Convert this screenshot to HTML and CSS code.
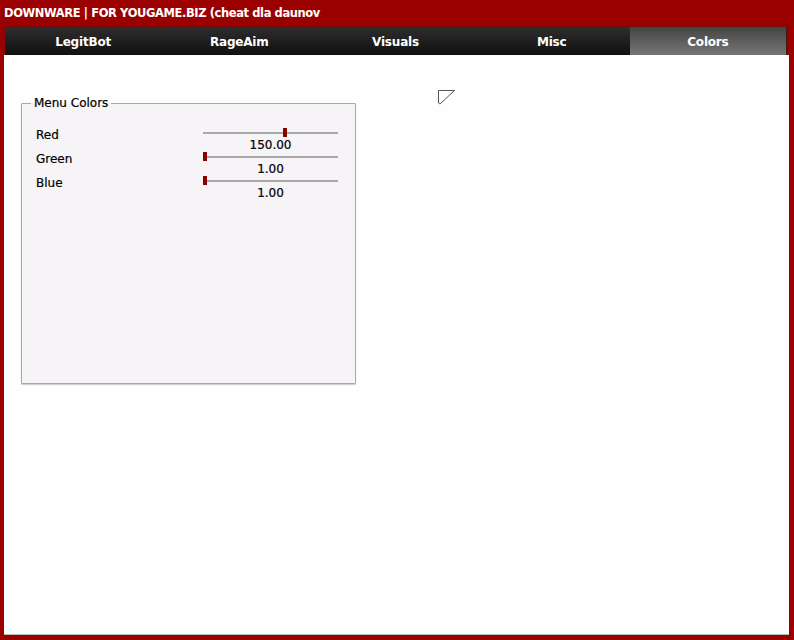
FILE: index.html
```html
<!DOCTYPE html>
<html lang="en">

<head>
  <meta charset="UTF-8">
  <title>DOWNWARE</title>
  <link rel="stylesheet" href="styles.css">
</head>

<body>
  <div class="window">
    <div class="title">DOWNWARE | FOR YOUGAME.BIZ (cheat dla daunov</div>

    <div class="tabs">
      <div class="tab">LegitBot</div>
      <div class="tab">RageAim</div>
      <div class="tab">Visuals</div>
      <div class="tab">Misc</div>
      <div class="tab active">Colors</div>
    </div>

    <div class="content">
      <fieldset class="group">
        <legend>Menu Colors</legend>
        <div class="row">
          <span class="label">Red</span>
          <div class="slider">
            <div class="track"><span class="knob" style="left: 59%"></span></div>
            <div class="value">150.00</div>
          </div>
        </div>
        <div class="row">
          <span class="label">Green</span>
          <div class="slider">
            <div class="track"><span class="knob" style="left: 0%"></span></div>
            <div class="value">1.00</div>
          </div>
        </div>
        <div class="row">
          <span class="label">Blue</span>
          <div class="slider">
            <div class="track"><span class="knob" style="left: 0%"></span></div>
            <div class="value">1.00</div>
          </div>
        </div>
      </fieldset>

      <!-- cursor -->
      <svg class="cursor" width="20" height="18" viewBox="0 0 20 18">
        <path d="M1.5 1.5 H17.5 L3 15 L1.5 14 Z" fill="#fff" stroke="#555" stroke-width="1"/>
      </svg>
    </div>
  </div>
</body>

</html>
```

FILE: styles.css
```css
html,
body {
  margin: 0;
  padding: 0;
  height: 100%;
  overflow: hidden;
  font-family: "DejaVu Sans", Tahoma, sans-serif;
}

body {
  background: #9b0000;
}

.window {
  display: flex;
  flex-direction: column;
  height: 640px;
  padding: 0 5px 5px 4px;
  box-sizing: border-box;
}

.title {
  height: 27px;
  line-height: 27px;
  color: #fff;
  font-size: 11.5px;
  font-weight: bold;
  letter-spacing: -0.4px;
  white-space: nowrap;
}

.tabs {
  display: flex;
  height: 28px;
  margin: 0 3px 0 1px;
  background: linear-gradient(#2e2e2e, #101010);
  box-shadow: 1px 0 2px #222;
}

.tab {
  flex: 1;
  text-align: center;
  line-height: 31px;
  color: #fff;
  font-size: 12px;
  font-weight: bold;
  letter-spacing: -0.2px;
}

.tab.active {
  background: linear-gradient(#444, #767676);
}

.content {
  flex: 1;
  position: relative;
  background: #fefefe;
  border-bottom: 1px solid #bbb;
  padding: 41px 0 0 17px;
}

.group {
  width: 302px;
  height: 268px;
  margin: 0;
  padding: 18px 17px 0 14px;
  border: 1px solid #a8a8a8;
  border-radius: 1px;
  background: #f6f4f6;
  box-shadow: 0 1px 1px #ccc;
}

.group legend {
  padding: 0 3px;
  margin-left: -5px;
  font-size: 12px;
  color: #000;
  -webkit-text-stroke: 0.2px #000;
}

.row {
  display: flex;
  justify-content: space-between;
  height: 24px;
  font-size: 12px;
  color: #000;
  -webkit-text-stroke: 0.2px #000;
}

.label {
  margin-top: 0;
}

.slider {
  width: 135px;
  text-align: center;
}

.track {
  position: relative;
  height: 2px;
  margin-top: 4px;
  background: #a9a9a9;
}

.knob {
  position: absolute;
  top: -4px;
  width: 4px;
  height: 9px;
  background: #8a0000;
}

.value {
  margin-top: 4px;
}

.cursor {
  position: absolute;
  left: 433px;
  top: 34px;
}
```
